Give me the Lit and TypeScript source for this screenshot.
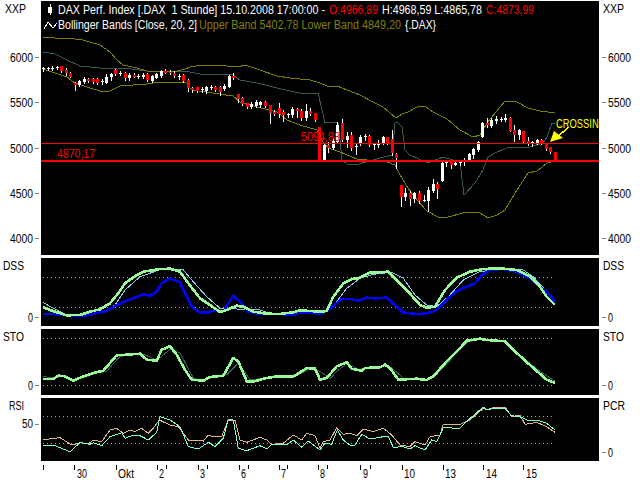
import { LitElement, html, svg, css } from "lit";
import { customElement } from "lit/decorators.js";

type Pt = [number, number];
// [body top, body bottom, wick top, wick bottom]; r = red candle
type Candle = [string, number, number, number, number];

// point lists were read off 3x crops, so map them back to page pixels
const crop = (ox: number, oy: number, flat: number[]): Pt[] => {
  const out: Pt[] = [];
  for (let i = 0; i < flat.length; i += 2) out.push([ox + flat[i] / 3, oy + flat[i + 1] / 3]);
  return out;
};
const line = (p: Pt[]) => p.map((q) => q[0].toFixed(1) + "," + q[1].toFixed(1)).join(" ");

const CANDLES: Candle[] = [
  ["w",68,69,67,71],["w",68,69,67,70],["w",68,68,66,70],["w",67,68,66,69],["r",66,71,66,72],["r",70,73,68,75],
  ["r",73,77,72,77],["r",83,85,82,90],["w",81,85,80,86],["w",79,82,77,83],["r",79,81,78,82],["r",79,82,78,83],
  ["r",79,83,78,84],["w",81,82,79,84],["w",77,83,74,83],["w",74,77,73,80],["r",70,74,69,75],["w",73,74,71,75],
  ["r",73,78,72,80],["w",75,78,73,80],["r",75,77,73,77],["w",76,77,74,78],["w",75,77,73,78],["r",74,80,73,81],
  ["w",76,81,75,82],["w",74,78,73,78],["w",71,76,70,77],["r",71,73,69,73],["r",72,73,70,74],["r",73,76,71,77],
  ["w",76,77,74,79],["r",75,81,74,82],["r",80,88,79,91],["r",88,90,87,92],["r",87,91,87,92],["w",89,90,87,92],
  ["w",87,91,86,93],["w",87,88,85,89],["r",87,90,86,91],["r",87,92,86,95],["w",86,89,84,90],["w",76,87,75,87],
  ["r",76,78,73,79],["r",94,99,94,102],["r",98,104,97,105],["r",103,107,103,108],["w",104,107,102,108],["w",102,106,100,107],
  ["w",102,105,101,107],["r",102,106,101,107],["r",105,113,105,123],["r",112,114,110,115],["r",108,114,103,117],["r",112,115,110,121],
  ["w",114,115,113,117],["w",109,115,107,117],["r",109,111,108,117],["r",111,118,109,120],["w",111,118,104,120],["r",111,114,108,115],
  ["r",113,120,113,121],["r",127,160,127,160],["w",145,160,144,160],["r",145,148,142,152],["w",141,148,138,149],["w",125,142,122,142],
  ["r",123,140,119,141],["w",136,140,132,147],["r",135,148,132,150],["w",146,147,144,154],["w",137,143,135,145],["w",136,137,134,140],
  ["r",136,145,135,146],["w",144,145,143,149],["w",143,145,140,147],["w",137,143,136,144],["r",137,143,137,144],["r",139,153,130,155],
  ["r",154,158,153,168],["r",185,197,185,206],["w",193,197,188,200],["r",193,199,191,205],["w",193,199,192,202],["r",193,201,191,203],
  ["w",200,201,195,201],["w",190,201,187,211],["w",184,191,179,192],["r",184,189,182,198],["w",163,181,162,181],["w",162,163,161,166],
  ["r",162,165,161,168],["w",163,165,160,165],["w",162,163,161,165],["w",160,162,158,165],["w",154,160,153,161],["w",149,155,148,158],
  ["w",142,150,141,151],["w",123,137,122,137],["r",123,125,118,127],["w",120,126,118,127],["w",119,121,116,123],["w",119,120,117,121],
  ["w",118,120,114,121],["r",118,131,117,131],["r",130,135,125,141],["w",130,135,129,139],["r",131,142,131,143],["r",141,144,137,145],
  ["w",142,143,141,146],["w",140,143,139,144],["r",140,144,139,144],["r",144,149,143,150],["r",147,152,147,153],["r",152,161,152,161],
];

const UPPER: Pt[] = [
  [43,37],[55,38],[67,38],[83,40],[100,45],[110,52],[117,60],[123,65],[137,68],[147,71],[160,71],[177,71],[185,69],[190,67],
  [203,65],[227,66],[238,67],[245,65],[257,69],[277,76],[290,78],[310,80],[320,83],[327,86],[337,86],[347,90],[360,95],[373,102],
  [383,107],[396,118],[402,114],[408,112],[417,107],[425,106],[433,112],[447,119],[460,130],[473,137],[480,135],[487,123],
  [505,101],[517,102],[528,108],[540,111],[555,113],
];
const LOWER: Pt[] = [
  [43,69],[67,77],[75,83],[90,88],[100,91],[110,91],[120,86],[147,84],[160,82],[185,82],[192,90],[213,93],[233,96],[240,102],
  [257,107],[277,112],[287,120],[300,125],[317,130],[323,142],[328,148],[340,152],[357,159],[387,162],[395,165],[400,175],
  [408,188],[417,200],[427,211],[438,217],[448,217],[463,213],[475,212],[480,213],[488,218],[497,215],[505,210],[517,190],
  [528,173],[537,171],[547,163],[555,161],
];
const MIDDLE: Pt[] = [
  [43,52],[55,54],[67,60],[80,66],[100,68],[123,68],[147,71],[173,71],[185,71],[200,74],[227,74],[233,75],[240,80],[257,83],
  [277,88],[290,91],[300,93],[318,93],[322,110],[325,123],[333,122],[338,123],[339,130],[342,160],[347,164],[355,165],[370,161],
  [380,158],[392,155],[395,123],[397,122],[402,127],[405,150],[410,155],[428,163],[443,157],[460,162],[464,195],[475,183],
  [483,170],[488,157],[497,152],[510,147],[527,148],[543,143],[547,137],[552,123],[555,123],
];

const DSS_GREEN = [
  ...crop(0,255,[129,157,150,165,180,175,200,181,240,180,270,170,300,163,330,145,355,115,375,85,410,60,430,50,480,42,510,41,540,50,565,85,600,130,630,150,660,171,680,165,710,152,730,155,760,170,800,176,840,177,880,172,900,166,960,170]),
  ...crop(320,255,[20,168,40,125,70,85,95,72,115,70,150,53,205,50,230,75,260,105,300,150,320,158,345,155,375,105,410,68,450,50,490,42,540,40,590,45,630,65,660,95,680,125,705,150]),
];
const DSS_BLUE = [
  ...crop(0,255,[129,177,180,178,200,181,260,181,300,172,320,168,360,145,400,130,430,118,450,122,470,110,485,85,510,70,540,82,555,115,575,155,600,173,620,173,640,167,670,170,685,145,700,123,720,140,745,170,780,177,840,177,880,180,900,172,930,172,960,177]),
  ...crop(320,255,[25,165,65,132,90,132,115,137,140,128,165,130,200,128,225,150,250,173,300,178,340,170,360,155,385,130,410,108,440,95,465,85,485,60,510,45,550,42,590,50,630,70,660,95,690,120,705,140]),
];
const DSS_SKY = [
  ...crop(0,255,[129,142,160,160,200,180,260,178,310,172,345,150,375,105,420,65,480,44,550,45,580,80,620,125,660,160,710,162,780,165,810,175,860,178,900,170,960,170]),
  ...crop(320,255,[25,165,50,140,80,100,120,70,160,58,215,52,250,70,285,120,320,150,350,155,385,125,430,75,480,50,540,42,610,45,640,65,680,110,705,135]),
];
const STO_GREEN = [
  ...crop(0,328,[129,153,160,153,175,143,195,145,220,158,250,145,280,135,310,128,330,105,350,82,380,80,420,77,440,95,470,98,485,65,510,55,530,80,555,125,575,155,610,158,630,147,670,143,700,90,715,100,740,160,765,160,790,152,830,145,880,146,920,120,945,122,960,155]),
  ...crop(320,328,[20,150,50,115,80,103,95,122,125,128,135,120,180,118,195,110,210,120,235,155,290,152,320,156,340,145,380,100,420,60,440,38,480,32,500,36,555,40,590,75,640,120,680,155,705,165]),
];
const STO_SLATE = [
  ...crop(0,328,[129,145,160,150,185,142,220,157,250,150,290,135,320,130,360,85,430,78,470,97,515,60,540,75,580,150,610,158,640,147,680,140,715,105,750,155,800,150,880,148,930,122,960,130]),
  ...crop(320,328,[30,152,50,130,80,108,120,125,190,115,215,120,250,150,320,155,350,140,420,65,445,42,480,32,555,40,610,90,660,130,705,160]),
];
const RSI_TAN = [
  ...crop(0,395,[129,135,160,130,180,128,215,150,245,143,265,147,280,135,305,140,330,105,350,100,370,115,390,105,405,110,425,100,445,115,460,100,478,75,510,90,535,95,565,135,610,138,625,120,640,125,665,125,685,75,705,75,720,135,740,142,780,127,800,135,815,148,850,145,880,120,905,135,920,115,945,122]),
  ...crop(320,395,[0,160,10,140,30,135,50,98,70,118,90,115,110,122,130,102,160,110,190,100,215,120,240,150,270,155,285,140,315,150,330,125,360,120,370,88,420,88,450,75,490,40,500,45,520,38,555,36,575,65,600,60,615,88,650,82,680,95,705,112]),
];
const RSI_AQUA = [
  ...crop(0,395,[129,153,160,150,210,170,240,143,270,148,280,143,305,152,330,125,365,113,375,130,395,122,420,122,445,135,470,112,480,65,510,75,540,95,565,155,595,162,625,142,645,155,670,130,685,72,700,75,715,160,740,167,780,152,800,162,815,148,860,150,880,135,905,157,925,138]),
  ...crop(320,395,[0,165,15,145,35,148,52,105,70,135,90,150,105,150,125,118,150,132,190,125,205,125,220,157,250,155,270,162,285,152,315,165,335,135,350,140,370,98,420,100,445,75,490,36,500,45,520,40,555,40,575,62,600,65,620,75,650,75,680,85,705,105]),
];

// [tick x, label, label x, label width, closing tick x]
const DAYS: [number, string, number, number, number?][] = [
  [43, "", 0, 0],
  [74, "30", 77, 10],
  [116, "Okt", 118, 16],
  [157, "2", 159, 5, 166],
  [198, "3", 200, 5, 207],
  [239, "6", 241, 5, 248],
  [279, "7", 281, 5, 287],
  [318, "8", 320, 5, 327],
  [360, "9", 363, 5, 370],
  [402, "10", 404, 11],
  [443, "13", 445, 11],
  [483, "14", 486, 11],
  [523, "15", 526, 11],
];

const text = (x: number, y: number, w: number, s: string, cls = "ink") =>
  svg`<text class=${cls} x=${x} y=${y} textLength=${w} lengthAdjust="spacingAndGlyphs">${s}</text>`;

// price / scale labels either side of the plot, ticks sit against the plot edge
const axisLeft = (top: number, h: number, name: [number, number, number, string], marks: [number, number, number, number, string][]) => html`
  <svg class="axis" width="41" height=${h} viewBox="0 ${top} 41 ${h}">
    ${text(name[0], name[1], name[2], name[3])}
    ${marks.map((m) => svg`<rect class="tick" x="35" y=${m[0]} width="4" height="1"></rect>${text(m[1], m[2], m[3], m[4])}`)}
  </svg>`;

const axisRight = (top: number, h: number, name: [number, number, string], marks: [number, number, number, string][]) => html`
  <svg class="axis" width="41" height=${h} viewBox="599 ${top} 41 ${h}">
    ${text(603, name[0], name[1], name[2])}
    ${marks.map((m) => svg`<rect class="tick" x="602" y=${m[0]} width="4" height="1"></rect>${text(608, m[1], m[2], m[3])}`)}
  </svg>`;

const dots = (y: number) => svg`<line class="dots" x1="43" x2="553" y1=${y + 0.5} y2=${y + 0.5}></line>`;

@customElement("app-root")
export class AppRoot extends LitElement {
  static styles = css`
    :host {
      display: block;
      width: 640px;
      height: 480px;
      background: #fff;
      overflow: hidden;
    }
    .page {
      display: flex;
      flex-direction: column;
      gap: 3px;
      padding-top: 1px;
    }
    .row {
      display: grid;
      grid-template-columns: 41px 558px 41px;
    }
    svg {
      display: block;
    }
    .plot {
      background: #000;
    }
    .days {
      margin-top: -3px;
    }
    text {
      font: 12px "Liberation Sans", Arial, sans-serif;
      white-space: pre;
    }
    .ink { fill: #000; }
    .white { fill: #fff; }
    .red { fill: #f00; }
    .olive { fill: #808000; }
    .yellow { fill: #ff0; }
    .tick { fill: #808080; }
    .lines polyline, .lines line {
      fill: none;
      shape-rendering: crispEdges;
    }
    .upper { stroke: #808000; }
    .middle { stroke: #3a5a5a; }
    .dots {
      stroke: #a0a0a0;
      stroke-dasharray: 1 3;
    }
    .green { stroke: #98fb98; stroke-width: 2.6; }
    .blue { stroke: #00f; stroke-width: 2.6; }
    .sky { stroke: #87ceeb; }
    .slate { stroke: #3a5a5a; }
    .tan { stroke: #deb887; }
    .aqua { stroke: #7fffd4; }
    .body-r { fill: #f00; }
    .body-w { fill: #fff; }
    .wick { fill: #fff; }
    .icon { fill: none; stroke: #fff; shape-rendering: crispEdges; }
    .pointer { stroke: #ff0; stroke-width: 1.5; }
  `;

  private candles() {
    return CANDLES.map((c, i) => {
      const x = Math.round(43 + 4.53 * i);
      return svg`
        <rect class="wick" x=${x} y=${c[3]} width="1" height=${c[4] - c[3] + 1}></rect>
        <rect class=${c[0] === "r" ? "body-r" : "body-w"} x=${x - 1} y=${c[1]} width="3" height=${Math.max(1, c[2] - c[1])}></rect>`;
    });
  }

  private mainPlot() {
    return html`
      <svg class="plot lines" width="558" height="254" viewBox="41 1 558 254">
        <polyline class="middle" points=${line(MIDDLE)}></polyline>
        <polyline class="upper" points=${line(UPPER)}></polyline>
        <polyline class="upper" points=${line(LOWER)}></polyline>
        ${this.candles()}
        <rect class="red" x="41" y="143" width="558" height="1"></rect>
        <rect class="red" x="41" y="160" width="558" height="2"></rect>

        <rect class="white" x="48" y="7" width="4" height="6"></rect>
        <rect class="white" x="50" y="4" width="1" height="11"></rect>
        <polyline class="icon" points="44,29 48,22 53,28 57,23"></polyline>

        ${text(58, 14, 267, "DAX Perf. Index [.DAX  1 Stunde] 15.10.2008 17:00:00 -", "white")}
        ${text(329, 14, 49, "O:4966,89", "red")}
        ${text(382, 14, 100, "H:4968,59 L:4865,78", "white")}
        ${text(486, 14, 48, "C:4873,99", "red")}
        ${text(58, 29, 139, "Bollinger Bands [Close, 20, 2]", "white")}
        ${text(199, 29, 202, "Upper Band 5402,78 Lower Band 4849,20", "olive")}
        ${text(405, 29, 31, "{.DAX}", "white")}

        ${text(57, 158, 38, "4870,17", "red")}
        ${text(301, 141, 39, "5094,88", "red")}
        ${text(556, 128, 50, "CROSSING", "yellow")}
        <polygon class="yellow" points="550,142 554,131 563,138"></polygon>
        <line class="pointer" x1="558" y1="136" x2="568" y2="128"></line>
      </svg>`;
  }

  render() {
    const priceY: [number, number, string][] = [
      [57, 62, "6000"],
      [102, 107, "5500"],
      [148, 153, "5000"],
      [193, 198, "4500"],
      [238, 243, "4000"],
    ];
    return html`
      <div class="page">
        <div class="row">
          ${axisLeft(1, 254, [5, 13, 21, "XXP"], priceY.map((p) => [p[0], 10, p[1], 23, p[2]]))}
          ${this.mainPlot()}
          ${axisRight(1, 254, [13, 21, "XXP"], priceY.map((p) => [p[0], p[1], 23, p[2]]))}
        </div>

        <div class="row">
          ${axisLeft(258, 68, [3, 270, 21, "DSS"], [[317, 28, 322, 5, "0"]])}
          <svg class="plot lines" width="558" height="68" viewBox="41 258 558 68">
            ${dots(277)}${dots(307)}
            <polyline class="sky" points=${line(DSS_SKY)}></polyline>
            <polyline class="blue" points=${line(DSS_BLUE)}></polyline>
            <polyline class="green" points=${line(DSS_GREEN)}></polyline>
          </svg>
          ${axisRight(258, 68, [270, 21, "DSS"], [[317, 322, 5, "0"]])}
        </div>

        <div class="row">
          ${axisLeft(329, 66, [3, 341, 21, "STO"], [[385, 28, 390, 5, "0"]])}
          <svg class="plot lines" width="558" height="66" viewBox="41 329 558 66">
            ${dots(338)}${dots(385)}
            <polyline class="slate" points=${line(STO_SLATE)}></polyline>
            <polyline class="green" points=${line(STO_GREEN)}></polyline>
          </svg>
          ${axisRight(329, 66, [341, 21, "STO"], [[385, 390, 5, "0"]])}
        </div>

        <div class="row">
          ${axisLeft(398, 63, [9, 410, 15, "RSI"], [[424, 22, 428, 11, "50"]])}
          <svg class="plot lines" width="558" height="63" viewBox="41 398 558 63">
            ${dots(416)}${dots(443)}
            <polyline class="tan" points=${line(RSI_TAN)}></polyline>
            <polyline class="aqua" points=${line(RSI_AQUA)}></polyline>
          </svg>
          ${axisRight(398, 63, [410, 22, "PCR"], [[452, 457, 5, "0"]])}
        </div>

        <svg class="days" width="640" height="19" viewBox="0 461 640 19">
          ${DAYS.map((d) => svg`
            <rect class="ink" x=${d[0]} y="465" width="1" height="5"></rect>
            ${d[1] ? text(d[2], 478, d[3], d[1]) : ""}
            ${d[4] ? svg`<rect class="ink" x=${d[4]} y="465" width="1" height="4"></rect>` : ""}
          `)}
        </svg>
      </div>
    `;
  }
}
